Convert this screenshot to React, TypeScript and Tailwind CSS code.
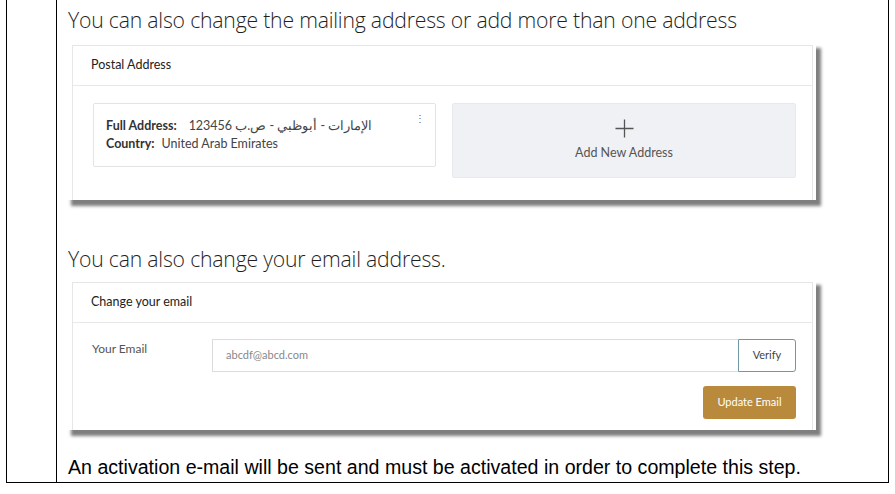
const headingFont = { fontFamily: '"Open Sans", "Noto Sans", sans-serif' };

function ShotPanel({ title, children }: { title: string; children: React.ReactNode }) {
  return (
    <div className="ml-[9px] w-[750px] bg-white pt-[3px] pl-[6px] pr-[3px] shadow-[5px_6px_3px_0px_rgba(0,0,0,0.5)] font-['Lato',sans-serif]">
      <div className="border-l border-t border-r border-[#e6e6e6]">
        <div className="h-[40px] flex items-center pl-[18px] border-b border-[#e8e8e8] text-[12.5px] text-[#222]">
          {title}
        </div>
        {children}
      </div>
    </div>
  );
}

const App = () => {
  return (
    <div className="w-[895px] h-[494px] bg-white">
      <div className="ml-[6px] w-[883px] h-[483px] flex border-l border-r border-b border-black">
        <div className="w-[50px] border-r border-black" />
        <div className="flex-1 flex flex-col">
          <h1
            className="mt-[5px] pl-[11px] text-[21.2px] leading-[30px] font-light text-[#1f1f1f] tracking-[-0.2px]"
            style={headingFont}
          >
            You can also change the mailing address or add more than one address
          </h1>
          <div className="mt-[7px]">
            <ShotPanel title="Postal Address">
              <div className="flex gap-[16px] pl-[20px] pr-[16px] pt-[17px] pb-[22px] items-start">
                <div className="relative w-[343px] h-[64px] border border-[#e4e4e4] rounded-[2px] pl-[12px] pt-[13px] text-[12.5px] leading-[18px] text-[#444]">
                  <div className="flex items-center">
                    <span className="font-bold text-[#333]">Full Address:</span>
                    <span className="ml-[12px]" dir="rtl">
                      الإمارات - أبوظبي - ص.ب 123456
                    </span>
                  </div>
                  <div>
                    <span className="font-bold text-[#333]">Country:</span>
                    <span className="ml-[7px]">United Arab Emirates</span>
                  </div>
                  <span className="absolute right-[10px] top-[9px] text-[10px] leading-[10px] text-[#666]">⋮</span>
                </div>
                <div className="w-[344px] h-[75px] bg-[#f0f1f5] border border-[#e8e9ee] rounded-[2px] flex flex-col items-center justify-center text-[#555]">
                  <svg width="19" height="19" viewBox="0 0 19 19">
                    <path d="M9.5 0.5v18M0.5 9.5h18" stroke="#555" strokeWidth="1.3" fill="none" />
                  </svg>
                  <span className="mt-[6px] text-[12.5px]">Add New Address</span>
                </div>
              </div>
            </ShotPanel>
          </div>
          <h2
            className="mt-[44px] pl-[11px] text-[21.2px] leading-[30px] font-light text-[#1f1f1f] tracking-[-0.2px]"
            style={headingFont}
          >
            You can also change your email address.
          </h2>
          <div className="mt-[5px]">
            <ShotPanel title="Change your email">
              <div className="pl-[19px] pr-[16px] pt-[16px] pb-[11px]">
                <div className="flex items-start">
                  <span className="w-[120px] pt-[1px] text-[12px] text-[#555]">Your Email</span>
                  <div className="flex-1 flex h-[33px]">
                    <div className="flex-1 border border-[#dcdcdc] border-r-0 flex items-center pl-[13px] text-[11px] text-[#888]">
                      abcdf@abcd.com
                    </div>
                    <button className="w-[58px] border border-[#6f9aa3] rounded-r-[3px] text-[11px] text-[#444]">
                      Verify
                    </button>
                  </div>
                </div>
                <div className="flex justify-end mt-[14px]">
                  <button className="w-[93px] h-[33px] rounded-[3px] bg-[#b98a3c] text-white text-[11px]">
                    Update Email
                  </button>
                </div>
              </div>
            </ShotPanel>
          </div>
          <p className="mt-[25px] pl-[11px] text-[19.6px] leading-[24px] text-black font-['Liberation_Sans',sans-serif]">
            An activation e-mail will be sent and must be activated in order to complete this step.
          </p>
        </div>
      </div>
    </div>
  );
};

export default App;
